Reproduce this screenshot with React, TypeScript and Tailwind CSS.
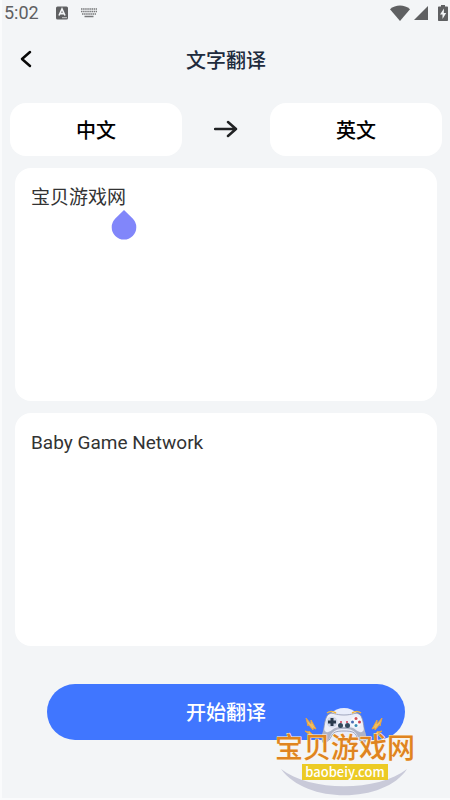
import { useState } from "react";

const StatusBar = () => (
  <div className="flex h-[26px] items-center pr-0.5 pl-0.5 font-['Roboto',sans-serif] text-[#5f6062]">
    <span className="text-lg leading-[26px]">5:02</span>
    <svg aria-hidden="true" className="ml-4 size-3.5" viewBox="0 0 14 14">
      <rect fill="#5f6062" height="13" rx="1.5" width="12" x="1" y="0.5" />
      <path d="M4 9.5 7 3l3 6.500M5.200 7.600h3.600" fill="none" stroke="#f3f5f7" strokeWidth="1.6" />
      <path d="M7 11.700h5" stroke="#c9cbcd" strokeWidth="1" />
    </svg>
    <svg aria-hidden="true" className="ml-3 h-2.5 w-4" viewBox="0 0 16 10">
      <path d="M0 1h16M0 3.500h16M1 6h14" stroke="#77787a" strokeDasharray="1.5 0.6" strokeWidth="1.7" />
      <path d="M3.500 8.500h9" stroke="#77787a" strokeWidth="1.5" />
    </svg>
    <svg aria-hidden="true" className="ml-auto h-4 w-5" viewBox="0 0 20 16">
      <path d="M0 4.200C5.500-.8 14.500-.8 20 4.200L10 16Z" fill="#5f6062" />
    </svg>
    <svg aria-hidden="true" className="ml-1 size-3.5" viewBox="0 0 14 14">
      <path d="M14 0v14H0Z" fill="#5f6062" />
    </svg>
    <svg aria-hidden="true" className="ml-2.5 h-4 w-2.5" viewBox="0 0 10 16">
      <path d="M3 0h4v1.600h2c.6 0 1 .4 1 1V15c0 .6-.4 1-1 1H1c-.6 0-1-.4-1-1V2.600c0-.6.4-1 1-1h2Z" fill="#5f6062" />
      <path d="M6 3.500 2 9.500h2.500V14L8.200 8H5.800Z" fill="#f3f5f7" />
    </svg>
  </div>
);

const SiteBadge = () => (
  <div className="pointer-events-none absolute right-[30px] bottom-0 h-24 w-[150px]">
    <svg aria-hidden="true" className="absolute inset-0 size-full" viewBox="0 0 150 96">
      <path d="M11 67C40 90 108 90 137 67 115 101 37 103 11 67Z" fill="#c9cad9" />
      <circle cx="74" cy="25" fill="#e9edfb" r="19" />
      <path
        d="M59 12c4-2 6 1 15 1s11-3 15-1c4 2 5 12 6 22 0 7-5 7-8 1-2-5-5-6-13-6s-11 1-13 6c-3 6-8 6-8-1 1-10 2-20 6-22Z"
        fill="#eceef8"
        stroke="#8d93ad"
        strokeWidth="0.8"
      />
      <path
        d="M54 27c-3 6-3 12-1 14 5 0 6-4 8-8 3-5 6-6 13-6s10 1 13 6c2 4 3 8 8 8 2-2 2-8-1-14-1 4-4 4-8 1-3-3-7-3-12-3s-9 0-12 3c-4 3-7 3-8-1Z"
        fill="#aeb3c6"
      />
      <path d="M57 11q4-3 9 0M82 11q5-3 9 0" fill="none" stroke="#efb540" strokeWidth="1.5" />
      <circle cx="62" cy="20" fill="#d2d9ea" r="5.500" />
      <path d="M58 20h8M62 16v8" stroke="#29394c" strokeWidth="3" />
      <circle cx="86" cy="20" fill="#f8f9fd" r="5.500" />
      <circle cx="86" cy="16.500" fill="#d55156" r="1.500" />
      <circle cx="86" cy="23.500" fill="#398bb4" r="1.500" />
      <circle cx="82.500" cy="20" fill="#486bb3" r="1.500" />
      <circle cx="89.500" cy="20" fill="#cb4054" r="1.500" />
      <circle cx="70.500" cy="23.500" fill="#34495d" r="2.500" />
      <circle cx="77.500" cy="23.500" fill="#34495d" r="2.500" />
      <path d="M70 20h2M76 20h2" stroke="#cb4054" strokeWidth="1.5" />
      <path
        d="m36 16 5 6v-4l5 9-3-1v2l-5-6v2ZM112 16l-5 6v-4l-5 9 3-1v2l5-6v2ZM35 29l4 1v-1l4 4-3-1v1ZM112 29l-4 1v-1l-4 4 3-1v1Z"
        fill="#efbd60"
        stroke="#e5a344"
        strokeWidth="1"
      />
    </svg>
    <div className="relative flex flex-col items-center pt-8">
      <span className="text-[28px] leading-[30px] font-medium whitespace-nowrap text-[#df8420] [paint-order:stroke_fill] [-webkit-text-stroke:1px_#fff4df]">
        宝贝游戏网
      </span>
      <span className="bg-[#eccb25] px-[3px] font-['Noto_Sans_CJK_SC',sans-serif] text-[13px] leading-4 font-medium text-white">
        baobeiy.com
      </span>
    </div>
  </div>
);

export default function App() {
  const [source, setSource] = useState("宝贝游戏网");

  return (
    <main className="relative min-h-screen border-b-2 border-l-2 border-[#fafbfc] bg-[#f3f5f7] font-['Roboto','Noto_Sans_CJK_SC',sans-serif]">
      <StatusBar />

      <header className="grid h-[66px] grid-cols-[48px_1fr_48px] items-center">
        <button aria-label="返回" className="flex h-12 items-center justify-center" type="button">
          <svg aria-hidden="true" className="h-5 w-4" viewBox="0 0 16 20">
            <path d="M12 3 4 10l8 7" fill="none" stroke="#080808" strokeLinecap="round" strokeLinejoin="round" strokeWidth="2.5" />
          </svg>
        </button>
        <h1 className="pt-1 text-center text-xl leading-7 font-medium text-[#202b3d]">文字翻译</h1>
      </header>

      <div className="mt-[11px] grid grid-cols-[1fr_88px_1fr] items-center px-2">
        <button className="h-[53px] rounded-2xl bg-white pt-0.5 text-xl leading-7 font-medium text-black" type="button">
          中文
        </button>
        <svg aria-hidden="true" className="h-5 w-6 justify-self-center" viewBox="0 0 24 20">
          <path d="M1 9h21M14 2l8 7-8 7" fill="none" stroke="#202224" strokeLinecap="round" strokeLinejoin="round" strokeWidth="2.5" />
        </svg>
        <button className="h-[53px] rounded-2xl bg-white pt-0.5 text-xl leading-7 font-medium text-black" type="button">
          英文
        </button>
      </div>

      <div className="mt-3 flex flex-col gap-3 px-[13px]">
        <div className="relative">
          <textarea
            aria-label="原文"
            className="block h-[233px] w-full resize-none rounded-2xl bg-white px-4 py-4 text-[19px] leading-7 text-[#333] outline-none"
            onChange={(event) => setSource(event.target.value)}
            value={source}
          />
          <svg aria-hidden="true" className="absolute top-[42px] left-24 h-[30px] w-[26px]" viewBox="0 0 26 30">
            <path d="m13 0 8.700 8.500a12.300 12.300 0 1 1-17.400 0Z" fill="#8186fa" />
          </svg>
        </div>
        <textarea
          aria-label="译文"
          className="block h-[233px] w-full resize-none rounded-2xl bg-white px-4 py-4 text-[19px] leading-7 text-[#333] outline-none"
          readOnly
          value="Baby Game Network"
        />
      </div>

      <div className="mt-[38px] px-[45px]">
        <button className="h-14 w-full rounded-full bg-[#4076ff] pt-0.5 text-xl leading-7 font-medium text-white" type="button">
          开始翻译
        </button>
      </div>

      <SiteBadge />
    </main>
  );
}
